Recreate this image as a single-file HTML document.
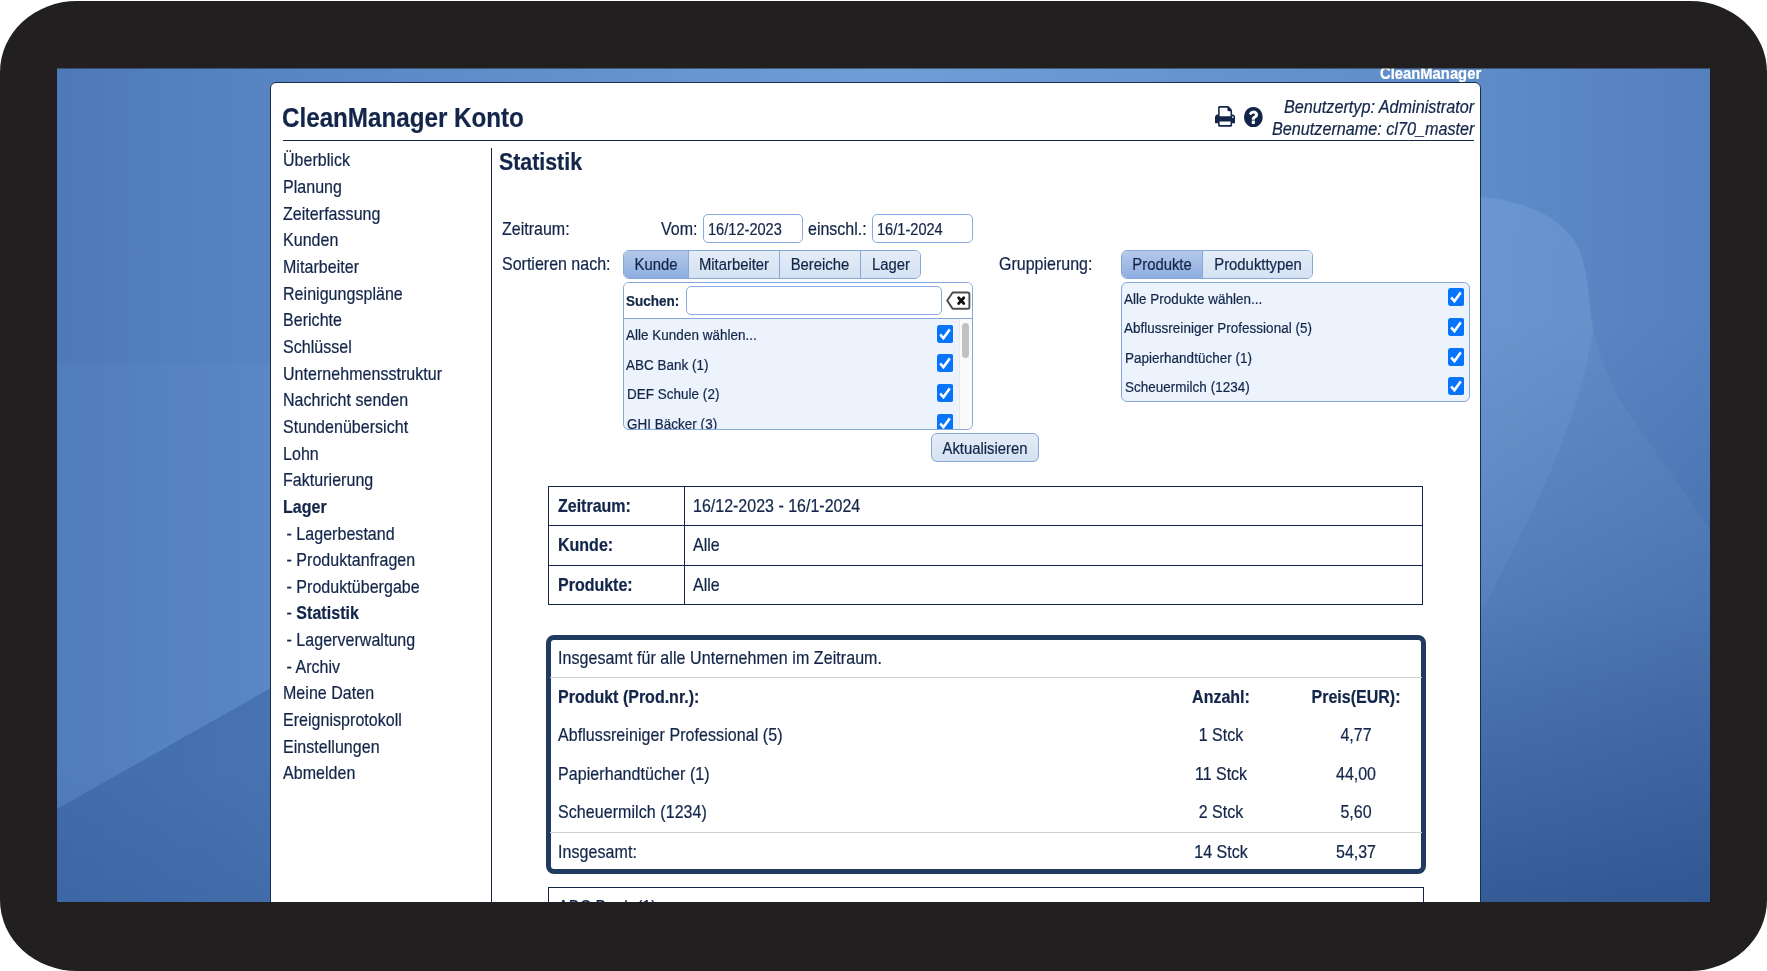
<!DOCTYPE html>
<html lang="de"><head><meta charset="utf-8"><title>CleanManager Konto - Statistik</title>
<style>
html,body{margin:0;padding:0;background:#fff;}
body{width:1767px;height:971px;position:relative;overflow:hidden;font-family:"Liberation Sans",Arial,Helvetica,sans-serif;color:#13264a;}
#bezel{position:absolute;left:0;top:1px;width:1767px;height:970px;background:#221f20;border-radius:77px / 71px;}
#screen{position:absolute;left:57px;top:68px;width:1653px;height:834px;overflow:hidden;background:#5b88c4;}
.bg{position:absolute;left:0;top:0;}
.t{position:absolute;white-space:nowrap;line-height:1;will-change:transform;-webkit-text-stroke:0.2px currentColor;transform:scaleY(1.105);transform-origin:0 0;}
.b,b{font-weight:bold;}
.i{font-style:italic;}
</style></head><body>
<div id="bezel"></div>
<div id="screen">
<svg class="bg" width="1653" height="835" viewBox="0 0 1653 835">
<defs>
<linearGradient id="g1" x1="0" y1="0" x2="1" y2="0">
<stop offset="0" stop-color="#4e79b8"/><stop offset="0.13" stop-color="#5785c2"/><stop offset="0.5" stop-color="#6f9dd6"/><stop offset="0.86" stop-color="#5e8cc8"/><stop offset="1" stop-color="#5480bd"/>
</linearGradient>
<linearGradient id="g2" x1="0" y1="0" x2="0" y2="1">
<stop offset="0.3" stop-color="#1d3f7a" stop-opacity="0"/><stop offset="0.64" stop-color="#1d3f7a" stop-opacity="0.22"/><stop offset="1" stop-color="#1d3f7a" stop-opacity="0.63"/>
</linearGradient>
<linearGradient id="g3" x1="0" y1="0" x2="0" y2="1">
<stop offset="0" stop-color="#8db4e4" stop-opacity="0.11"/><stop offset="0.6" stop-color="#8db4e4" stop-opacity="0.10"/><stop offset="1" stop-color="#8db4e4" stop-opacity="0"/>
</linearGradient>
<linearGradient id="g4" x1="0" y1="0" x2="0" y2="1"><stop offset="0" stop-color="#1d3f7a" stop-opacity="0"/><stop offset="1" stop-color="#1d3f7a" stop-opacity="0.14"/></linearGradient>
</defs>
<rect width="1653" height="835" fill="url(#g1)"/>
<rect x="0" y="296" width="230" height="539" fill="#7fa9dc" opacity="0.09"/>
<path d="M0 741 L214 620 L214 835 L0 835 Z" fill="#27508f" opacity="0.36"/>
<rect x="0" y="700" width="230" height="135" fill="url(#g4)"/>
<path d="M1423 129 C1470 133 1508 150 1523 183 C1531 205 1532 235 1536 261 C1545 300 1560 330 1574 348 C1600 385 1630 430 1653 461 L1653 640 L1423 640 Z" fill="url(#g3)"/>
<path d="M1423 129 C1470 133 1508 150 1523 183 C1531 205 1532 235 1536 261 C1530 320 1490 420 1466 461 C1450 495 1435 525 1423 544 Z" fill="#8db4e4" opacity="0.18"/>
<rect x="1423" width="230" height="835" fill="url(#g2)"/>
</svg>
<span class="t b" style="top:-2px;font-size:14.8px;right:229px;transform-origin:100% 0;color:#fff;">CleanManager</span>
<div style="position:absolute;left:213px;top:14px;width:1211px;height:918px;box-sizing:border-box;background:#fff;border:1px solid #1a2e52;border-radius:6px 6px 0 0;"></div>
<span class="t b" style="top:37px;font-size:24.2px;left:225.4px;">CleanManager Konto</span>
<span class="t i" style="top:30px;font-size:16.2px;right:235.8px;transform-origin:100% 0;">Benutzertyp: Administrator</span>
<span class="t i" style="top:52px;font-size:16.2px;right:235.8px;transform-origin:100% 0;">Benutzername: cl70_master</span>
<div style="position:absolute;left:226px;top:72px;width:1191px;height:1px;box-sizing:border-box;background:#13264a;"></div>
<div style="position:absolute;left:434px;top:80px;width:1px;height:852px;box-sizing:border-box;background:#13264a;"></div>
<svg style="position:absolute;left:1158.2px;top:38.2px" width="20.2" height="20.7" viewBox="0 128 1664 1536" preserveAspectRatio="none"><path fill="#13264a" d="M384 1536h896v-256h-896v256zM384 896h896v-384h-160q-40 0 -68 -28t-28 -68v-160h-640v640zM1536 960q0 -26 -19 -45t-45 -19t-45 19t-19 45t19 45t45 19t45 -19t19 -45zM1664 960v416q0 13 -9.500 22.500t-22.500 9.500h-224v160q0 40 -28 68t-68 28h-960q-40 0 -68 -28t-28 -68v-160h-224q-13 0 -22.500 -9.500t-9.500 -22.500v-416q0 -79 56.500 -135.500t135.500 -56.500h64v-544q0 -40 28 -68t68 -28h672q40 0 88 20t76 48l152 152q28 28 48 76t20 88v256h64q79 0 135.500 56.500t56.500 135.500z"/></svg>
<svg style="position:absolute;left:1187.2px;top:38.7px" width="18.7" height="20.4" viewBox="0 0 1536 1536" preserveAspectRatio="none"><path fill="#13264a" d="M896 1248v-192q0 -14 -9 -23t-23 -9h-192q-14 0 -23 9t-9 23v192q0 14 9 23t23 9h192q14 0 23 -9t9 -23zM1152 576q0 -88 -55.500 -163t-138.500 -116t-170 -41q-243 0 -371 213q-15 24 8 42l132 100q7 6 19 6q16 0 25 -12q53 -68 86 -92q34 -24 86 -24q48 0 85.500 26t37.500 59q0 38 -20 61t-68 45q-63 28 -115.500 86.500t-52.500 125.500v36q0 14 9 23t23 9h192q14 0 23 -9t9 -23q0 -19 21.500 -49.500t54.500 -49.500q32 -18 49 -28.500t46 -35t44.500 -48t28 -60.500t12.500 -81zM1536 768q0 209 -103 385.500t-279.500 279.500t-385.500 103t-385.500 -103t-279.500 -279.500t-103 -385.500t103 -385.500t279.500 -279.500t385.500 -103t385.500 103t279.500 279.500t103 385.500z"/></svg>
<span class="t " style="top:84px;font-size:16px;left:226.0px;letter-spacing:0.04px;">Überblick</span>
<span class="t " style="top:111px;font-size:16px;left:226.0px;letter-spacing:0.04px;">Planung</span>
<span class="t " style="top:138px;font-size:16px;left:226.0px;letter-spacing:0.04px;">Zeiterfassung</span>
<span class="t " style="top:164px;font-size:16px;left:226.0px;letter-spacing:0.04px;">Kunden</span>
<span class="t " style="top:191px;font-size:16px;left:226.0px;letter-spacing:0.04px;">Mitarbeiter</span>
<span class="t " style="top:218px;font-size:16px;left:226.0px;letter-spacing:0.04px;">Reinigungspläne</span>
<span class="t " style="top:244px;font-size:16px;left:226.0px;letter-spacing:0.04px;">Berichte</span>
<span class="t " style="top:271px;font-size:16px;left:226.0px;letter-spacing:0.04px;">Schlüssel</span>
<span class="t " style="top:298px;font-size:16px;left:226.0px;letter-spacing:0.04px;">Unternehmensstruktur</span>
<span class="t " style="top:324px;font-size:16px;left:226.0px;letter-spacing:0.04px;">Nachricht senden</span>
<span class="t " style="top:351px;font-size:16px;left:226.0px;letter-spacing:0.04px;">Stundenübersicht</span>
<span class="t " style="top:378px;font-size:16px;left:226.0px;letter-spacing:0.04px;">Lohn</span>
<span class="t " style="top:404px;font-size:16px;left:226.0px;letter-spacing:0.04px;">Fakturierung</span>
<span class="t " style="top:431px;font-size:16px;left:226.0px;letter-spacing:0.04px;"><b>Lager</b></span>
<span class="t " style="top:458px;font-size:16px;left:225.0px;letter-spacing:0.04px;">&nbsp;- Lagerbestand</span>
<span class="t " style="top:484px;font-size:16px;left:225.0px;letter-spacing:0.04px;">&nbsp;- Produktanfragen</span>
<span class="t " style="top:511px;font-size:16px;left:225.0px;letter-spacing:0.04px;">&nbsp;- Produktübergabe</span>
<span class="t " style="top:537px;font-size:16px;left:225.0px;letter-spacing:0.04px;">&nbsp;- <b>Statistik</b></span>
<span class="t " style="top:564px;font-size:16px;left:225.0px;letter-spacing:0.04px;">&nbsp;- Lagerverwaltung</span>
<span class="t " style="top:591px;font-size:16px;left:225.0px;letter-spacing:0.04px;">&nbsp;- Archiv</span>
<span class="t " style="top:617px;font-size:16px;left:226.0px;letter-spacing:0.04px;">Meine Daten</span>
<span class="t " style="top:644px;font-size:16px;left:226.0px;letter-spacing:0.04px;">Ereignisprotokoll</span>
<span class="t " style="top:671px;font-size:16px;left:226.0px;letter-spacing:0.04px;">Einstellungen</span>
<span class="t " style="top:697px;font-size:16px;left:226.0px;letter-spacing:0.04px;">Abmelden</span>
<span class="t b" style="top:83px;font-size:21.35px;left:441.9px;">Statistik</span>
<span class="t " style="top:153px;font-size:16px;left:444.6px;">Zeitraum:</span>
<span class="t " style="top:153px;font-size:16px;right:1012.2px;transform-origin:100% 0;">Vom:</span>
<div style="position:absolute;left:646px;top:146px;width:100px;height:29px;box-sizing:border-box;background:#fff;border:1px solid #8aabdf;border-radius:5px;"></div>
<span class="t " style="top:154px;font-size:14.6px;left:651px;">16/12-2023</span>
<span class="t " style="top:153px;font-size:16px;left:751.0px;">einschl.:</span>
<div style="position:absolute;left:815px;top:146px;width:101px;height:29px;box-sizing:border-box;background:#fff;border:1px solid #8aabdf;border-radius:5px;"></div>
<span class="t " style="top:154px;font-size:14.6px;left:820px;">16/1-2024</span>
<span class="t " style="top:188px;font-size:16px;left:444.6px;">Sortieren nach:</span>
<span class="t " style="top:188px;font-size:16px;left:942.2px;">Gruppierung:</span>
<div style="position:absolute;left:566px;top:182px;width:298px;height:29px;box-sizing:border-box;border:1px solid #87a7da;border-radius:6px;overflow:hidden;"><div style="position:absolute;left:-1px;top:0;bottom:0;width:65px;box-sizing:border-box;background:linear-gradient(#b5c9ea,#8dade0);"></div><div style="position:absolute;left:64px;top:0;bottom:0;width:91px;box-sizing:border-box;background:linear-gradient(#e4ecf7,#d5e2f2);border-left:1px solid #87a7da;"></div><div style="position:absolute;left:155px;top:0;bottom:0;width:81px;box-sizing:border-box;background:linear-gradient(#e4ecf7,#d5e2f2);border-left:1px solid #87a7da;"></div><div style="position:absolute;left:236px;top:0;bottom:0;width:61px;box-sizing:border-box;background:linear-gradient(#e4ecf7,#d5e2f2);border-left:1px solid #87a7da;"></div></div>
<span class="t " style="top:189px;font-size:14.85px;left:598.8px;transform:translateX(-50%) scaleY(1.105);">Kunde</span>
<span class="t " style="top:189px;font-size:14.85px;left:676.8px;transform:translateX(-50%) scaleY(1.105);">Mitarbeiter</span>
<span class="t " style="top:189px;font-size:14.85px;left:762.8px;transform:translateX(-50%) scaleY(1.105);">Bereiche</span>
<span class="t " style="top:189px;font-size:14.85px;left:833.8px;transform:translateX(-50%) scaleY(1.105);">Lager</span>
<div style="position:absolute;left:1064px;top:182px;width:192px;height:29px;box-sizing:border-box;border:1px solid #87a7da;border-radius:6px;overflow:hidden;"><div style="position:absolute;left:-1px;top:0;bottom:0;width:81px;box-sizing:border-box;background:linear-gradient(#b5c9ea,#8dade0);"></div><div style="position:absolute;left:80px;top:0;bottom:0;width:111px;box-sizing:border-box;background:linear-gradient(#e4ecf7,#d5e2f2);border-left:1px solid #87a7da;"></div></div>
<span class="t " style="top:189px;font-size:14.85px;left:1104.8px;transform:translateX(-50%) scaleY(1.105);">Produkte</span>
<span class="t " style="top:189px;font-size:14.85px;left:1200.8px;transform:translateX(-50%) scaleY(1.105);">Produkttypen</span>
<div style="position:absolute;left:566px;top:214px;width:350px;height:148px;box-sizing:border-box;background:#edf3fd;border:1px solid #87a7da;border-radius:6px;overflow:hidden;"><div style="position:absolute;left:0;right:0;top:0;height:35px;background:#fff;border-bottom:1px solid #87a7da"></div><div style="position:absolute;right:0;width:13px;top:36px;bottom:0;background:#fafafa;border-left:1px solid #e9e9e9;box-sizing:border-box"></div><div style="position:absolute;left:338px;width:7px;top:40px;height:35px;background:#c1c1c1;border-radius:4px"></div></div>
<span class="t b" style="top:226px;font-size:13.5px;left:569.3px;">Suchen:</span>
<div style="position:absolute;left:629px;top:218px;width:256px;height:29px;box-sizing:border-box;background:#fff;border:1px solid #8aabdf;border-radius:5px;"></div>
<svg style="position:absolute;left:889px;top:222.8px" width="24.6" height="19.2" viewBox="0 0 24.6 18" preserveAspectRatio="none"><path d="M1.2 9 L6.6 1.4 H22 Q23.4 1.4 23.4 2.8 V15.2 Q23.4 16.6 22 16.6 H6.6 Z" fill="#fff" stroke="#4c4c4c" stroke-width="1.9" stroke-linejoin="round"/><path d="M12.6 6.3 L17.8 11.7 M17.8 6.3 L12.6 11.7" stroke="#111" stroke-width="2.7" stroke-linecap="round"/></svg>
<div style="position:absolute;left:567px;top:251px;width:348px;height:110px;overflow:hidden">
<span class="t " style="top:9px;font-size:13.45px;left:2.2px;letter-spacing:0.04px;">Alle Kunden wählen...</span>
<div style="position:absolute;left:312.8px;top:6px;width:16.4px;height:18px"><svg viewBox="0 0 16 16" width="100%" height="100%" preserveAspectRatio="none"><rect width="16" height="16" rx="2.6" fill="#0775fb"/><path d="M3.1 8.5 L6.3 11.7 L12.5 3.9" fill="none" stroke="#fff" stroke-width="2.4"/></svg></div>
<span class="t " style="top:39px;font-size:13.45px;left:2.2px;letter-spacing:0.04px;">ABC Bank (1)</span>
<div style="position:absolute;left:312.8px;top:35px;width:16.4px;height:18px"><svg viewBox="0 0 16 16" width="100%" height="100%" preserveAspectRatio="none"><rect width="16" height="16" rx="2.6" fill="#0775fb"/><path d="M3.1 8.5 L6.3 11.7 L12.5 3.9" fill="none" stroke="#fff" stroke-width="2.4"/></svg></div>
<span class="t " style="top:68px;font-size:13.45px;left:3.0px;letter-spacing:0.04px;">DEF Schule (2)</span>
<div style="position:absolute;left:312.8px;top:65px;width:16.4px;height:18px"><svg viewBox="0 0 16 16" width="100%" height="100%" preserveAspectRatio="none"><rect width="16" height="16" rx="2.6" fill="#0775fb"/><path d="M3.1 8.5 L6.3 11.7 L12.5 3.9" fill="none" stroke="#fff" stroke-width="2.4"/></svg></div>
<span class="t " style="top:98px;font-size:13.45px;left:3.0px;letter-spacing:0.04px;">GHI Bäcker (3)</span>
<div style="position:absolute;left:312.8px;top:95px;width:16.4px;height:18px"><svg viewBox="0 0 16 16" width="100%" height="100%" preserveAspectRatio="none"><rect width="16" height="16" rx="2.6" fill="#0775fb"/><path d="M3.1 8.5 L6.3 11.7 L12.5 3.9" fill="none" stroke="#fff" stroke-width="2.4"/></svg></div>
</div>
<div style="position:absolute;left:1064px;top:214px;width:349px;height:120px;box-sizing:border-box;background:#edf3fd;border:1px solid #87a7da;border-radius:6px;"></div>
<span class="t " style="top:224px;font-size:13.45px;left:1066.8px;letter-spacing:0.04px;">Alle Produkte wählen...</span>
<div style="position:absolute;left:1391.1px;top:220px;width:16.4px;height:18px"><svg viewBox="0 0 16 16" width="100%" height="100%" preserveAspectRatio="none"><rect width="16" height="16" rx="2.6" fill="#0775fb"/><path d="M3.1 8.5 L6.3 11.7 L12.5 3.9" fill="none" stroke="#fff" stroke-width="2.4"/></svg></div>
<span class="t " style="top:253px;font-size:13.45px;left:1066.8px;letter-spacing:0.04px;">Abflussreiniger Professional (5)</span>
<div style="position:absolute;left:1391.1px;top:250px;width:16.4px;height:18px"><svg viewBox="0 0 16 16" width="100%" height="100%" preserveAspectRatio="none"><rect width="16" height="16" rx="2.6" fill="#0775fb"/><path d="M3.1 8.5 L6.3 11.7 L12.5 3.9" fill="none" stroke="#fff" stroke-width="2.4"/></svg></div>
<span class="t " style="top:283px;font-size:13.45px;left:1067.8px;letter-spacing:0.04px;">Papierhandtücher (1)</span>
<div style="position:absolute;left:1391.1px;top:280px;width:16.4px;height:18px"><svg viewBox="0 0 16 16" width="100%" height="100%" preserveAspectRatio="none"><rect width="16" height="16" rx="2.6" fill="#0775fb"/><path d="M3.1 8.5 L6.3 11.7 L12.5 3.9" fill="none" stroke="#fff" stroke-width="2.4"/></svg></div>
<span class="t " style="top:312px;font-size:13.45px;left:1067.8px;letter-spacing:0.04px;">Scheuermilch (1234)</span>
<div style="position:absolute;left:1391.1px;top:309px;width:16.4px;height:18px"><svg viewBox="0 0 16 16" width="100%" height="100%" preserveAspectRatio="none"><rect width="16" height="16" rx="2.6" fill="#0775fb"/><path d="M3.1 8.5 L6.3 11.7 L12.5 3.9" fill="none" stroke="#fff" stroke-width="2.4"/></svg></div>
<div style="position:absolute;left:874px;top:365px;width:108px;height:29px;box-sizing:border-box;border:1px solid #87a7da;border-radius:6px;background:linear-gradient(#e4ecf7,#d5e2f2);"></div>
<span class="t " style="top:373px;font-size:14.85px;left:927.6px;transform:translateX(-50%) scaleY(1.105);">Aktualisieren</span>
<div style="position:absolute;left:491px;top:418px;width:875px;height:119px;box-sizing:border-box;border:1px solid #13264a;"></div>
<div style="position:absolute;left:491px;top:457px;width:875px;height:1px;box-sizing:border-box;background:#13264a;"></div>
<div style="position:absolute;left:491px;top:497px;width:875px;height:1px;box-sizing:border-box;background:#13264a;"></div>
<div style="position:absolute;left:627px;top:418px;width:1px;height:119px;box-sizing:border-box;background:#13264a;"></div>
<span class="t b" style="top:430px;font-size:16px;left:500.8px;">Zeitraum:</span>
<span class="t " style="top:430px;font-size:16px;left:636.0px;">16/12-2023 - 16/1-2024</span>
<span class="t b" style="top:469px;font-size:16px;left:500.8px;">Kunde:</span>
<span class="t " style="top:469px;font-size:16px;left:635.6px;">Alle</span>
<span class="t b" style="top:509px;font-size:16px;left:500.8px;">Produkte:</span>
<span class="t " style="top:509px;font-size:16px;left:635.6px;">Alle</span>
<div style="position:absolute;left:489px;top:567px;width:880px;height:239px;box-sizing:border-box;border:5px solid #203a60;border-radius:8px;"></div>
<div style="position:absolute;left:493px;top:609px;width:872px;height:1px;box-sizing:border-box;background:#d0d0d0;"></div>
<div style="position:absolute;left:493px;top:764px;width:872px;height:1px;box-sizing:border-box;background:#d0d0d0;"></div>
<span class="t " style="top:582px;font-size:16px;left:500.5px;letter-spacing:0.07px;">Insgesamt für alle Unternehmen im Zeitraum.</span>
<span class="t b" style="top:621px;font-size:16px;left:500.5px;">Produkt (Prod.nr.):</span>
<span class="t b" style="top:621px;font-size:16px;left:1164px;transform:translateX(-50%) scaleY(1.105);">Anzahl:</span>
<span class="t b" style="top:621px;font-size:16px;left:1298.8px;transform:translateX(-50%) scaleY(1.105);">Preis(EUR):</span>
<span class="t " style="top:659px;font-size:16px;left:500.5px;letter-spacing:0.07px;">Abflussreiniger Professional (5)</span>
<span class="t " style="top:659px;font-size:16px;left:1164px;transform:translateX(-50%) scaleY(1.105);">1 Stck</span>
<span class="t " style="top:659px;font-size:16px;left:1298.8px;transform:translateX(-50%) scaleY(1.105);">4,77</span>
<span class="t " style="top:698px;font-size:16px;left:500.5px;letter-spacing:0.07px;">Papierhandtücher (1)</span>
<span class="t " style="top:698px;font-size:16px;left:1164px;transform:translateX(-50%) scaleY(1.105);">11 Stck</span>
<span class="t " style="top:698px;font-size:16px;left:1298.8px;transform:translateX(-50%) scaleY(1.105);">44,00</span>
<span class="t " style="top:736px;font-size:16px;left:500.5px;letter-spacing:0.07px;">Scheuermilch (1234)</span>
<span class="t " style="top:736px;font-size:16px;left:1164px;transform:translateX(-50%) scaleY(1.105);">2 Stck</span>
<span class="t " style="top:736px;font-size:16px;left:1298.8px;transform:translateX(-50%) scaleY(1.105);">5,60</span>
<span class="t " style="top:776px;font-size:16px;left:500.5px;letter-spacing:0.07px;">Insgesamt:</span>
<span class="t " style="top:776px;font-size:16px;left:1164px;transform:translateX(-50%) scaleY(1.105);">14 Stck</span>
<span class="t " style="top:776px;font-size:16px;left:1298.8px;transform:translateX(-50%) scaleY(1.105);">54,37</span>
<div style="position:absolute;left:0;top:0;width:1653px;height:1px;background:rgba(34,31,32,0.5)"></div>
<div style="position:absolute;left:491px;top:819px;width:876px;height:113px;box-sizing:border-box;border:1px solid #13264a;"></div>
<span class="t " style="top:831px;font-size:16px;left:500.5px;letter-spacing:0.07px;">ABC Bank (1)</span>
</div>
</body></html>
